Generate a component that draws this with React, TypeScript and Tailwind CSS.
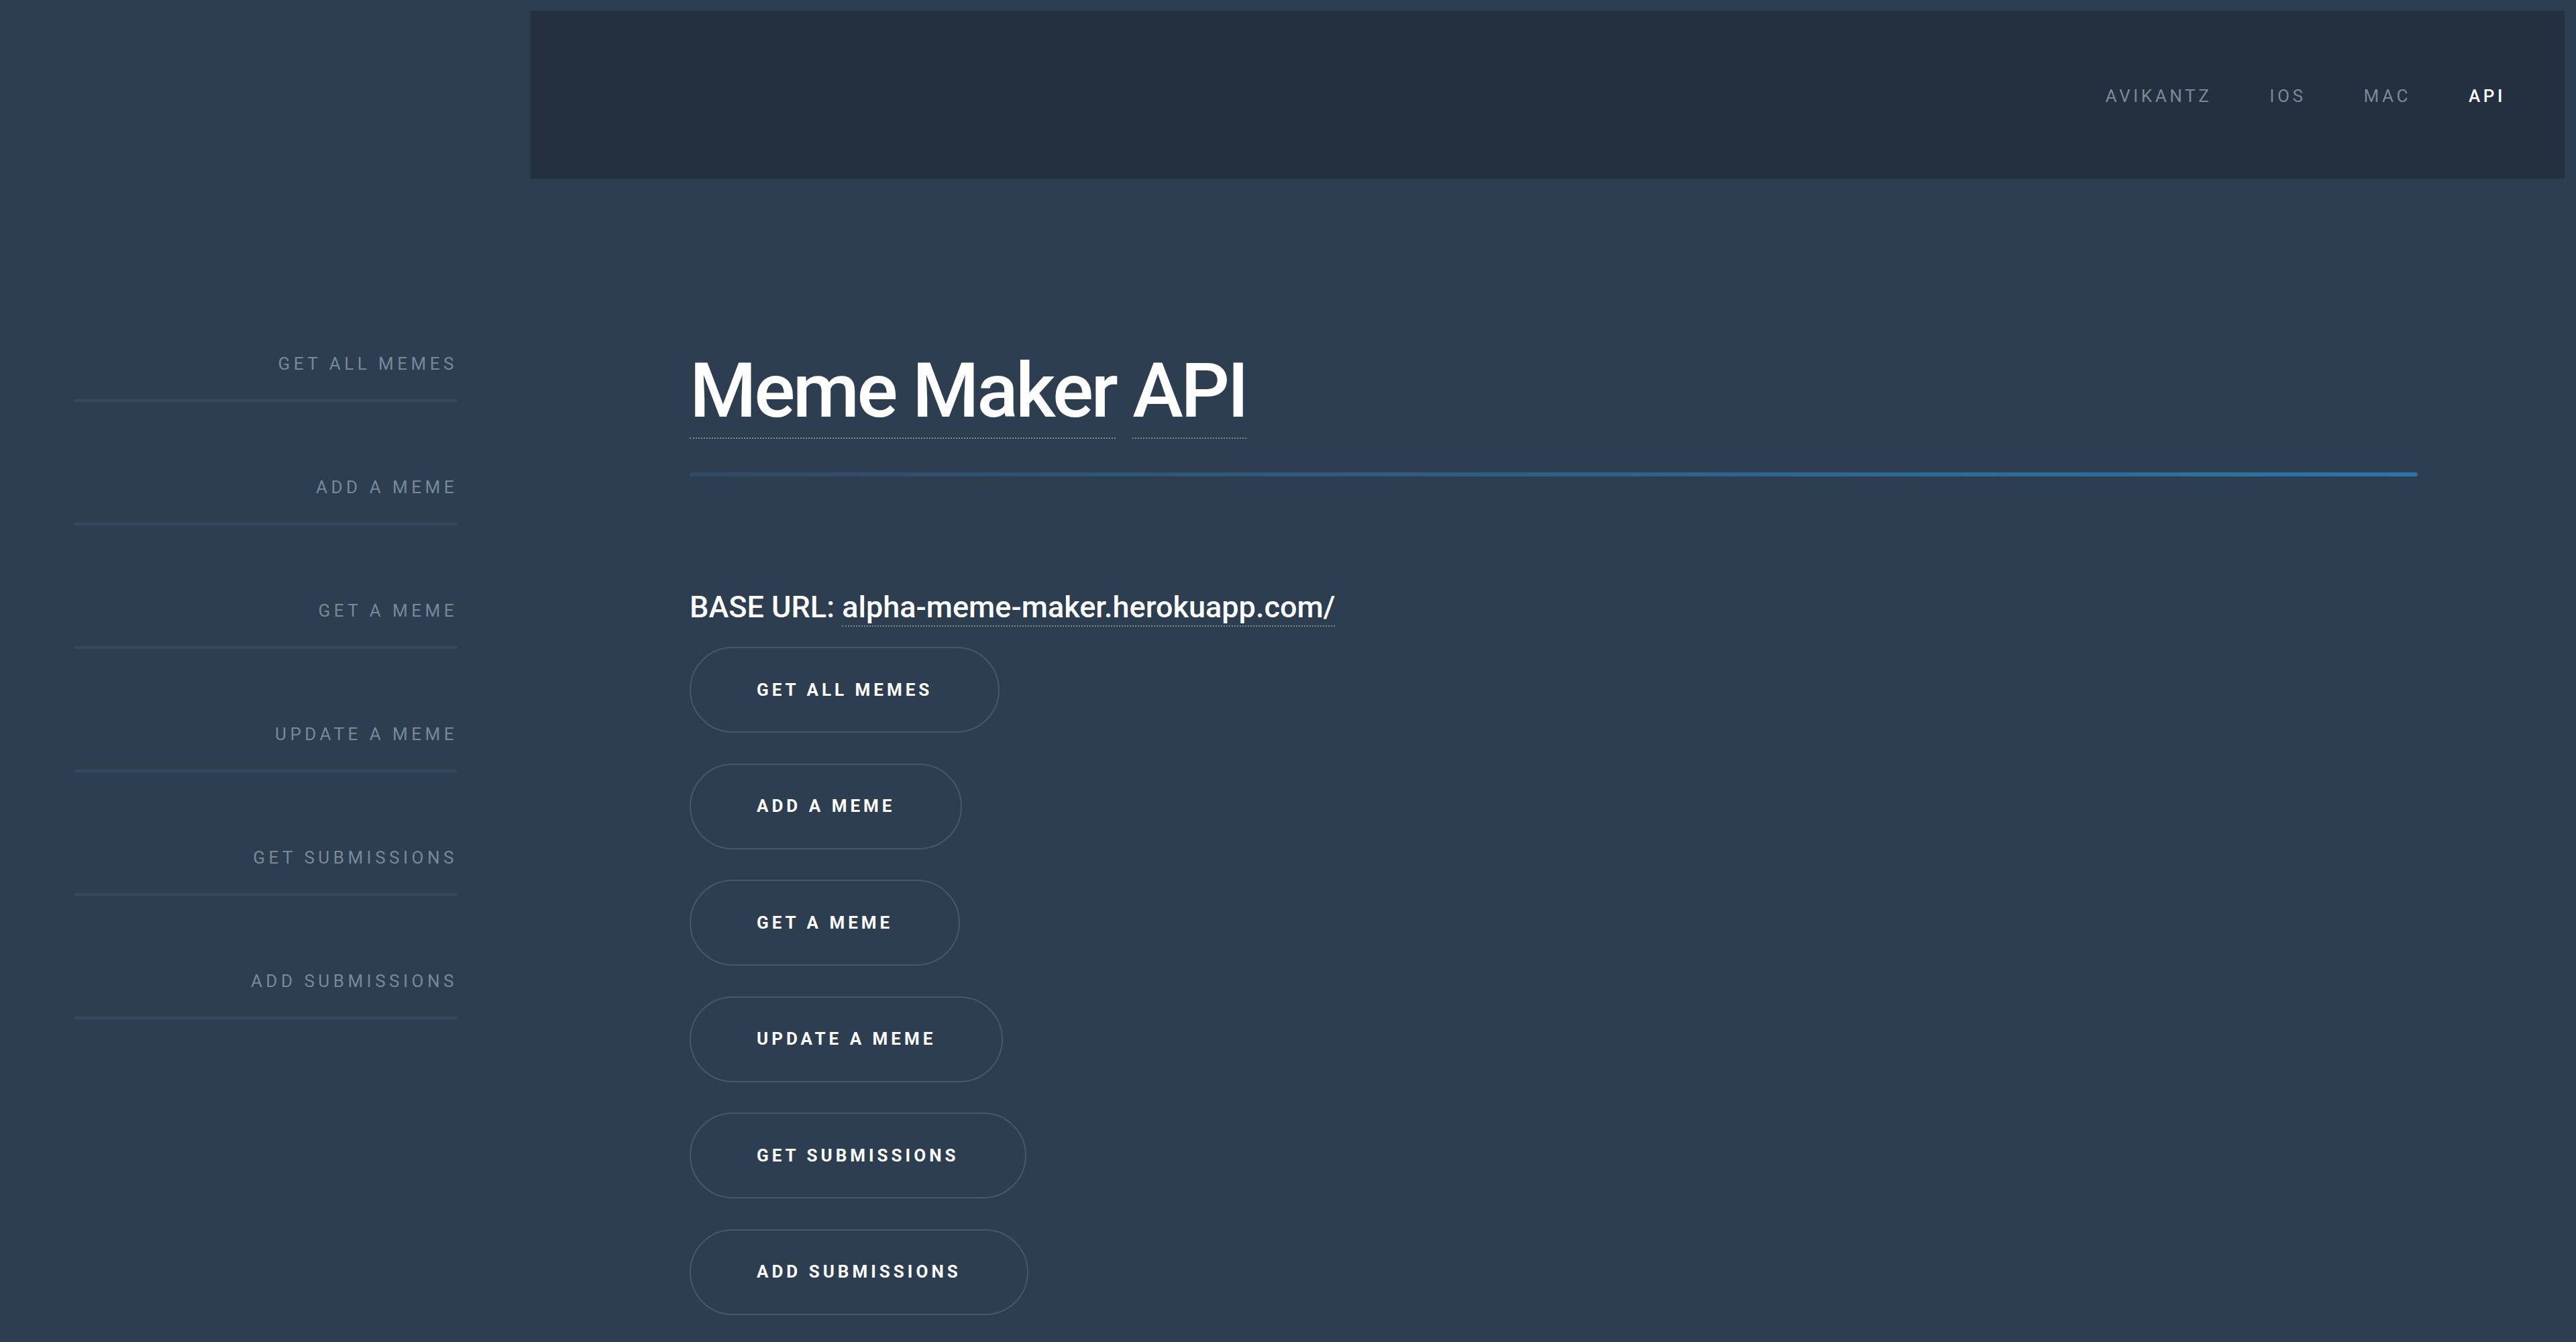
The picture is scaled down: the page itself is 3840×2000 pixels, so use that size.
const sideLinks = [
  "GET ALL MEMES",
  "ADD A MEME",
  "GET A MEME",
  "UPDATE A MEME",
  "GET SUBMISSIONS",
  "ADD SUBMISSIONS",
];

const navLinks = [
  { label: "AVIKANTZ", active: false },
  { label: "IOS", active: false },
  { label: "MAC", active: false },
  { label: "API", active: true },
];

export default function App() {
  return (
    <div className="min-h-[2000px] w-full bg-[#2c3e50] font-['Roboto','Liberation_Sans',sans-serif] flex">
      {/* side navigation */}
      <aside className="w-[791px] shrink-0 pt-[522px] pl-[110px] pr-[109px]">
        <ul className="flex flex-col gap-[107px]">
          {sideLinks.map((l) => (
            <li key={l} className="flex flex-col">
              <a className="h-[40px] leading-[40px] text-right text-[26px] tracking-[5.5px] text-[#7a8899]">
                {l}
              </a>
              <div className="mt-[33px] h-[4px] rounded-full bg-[#34495e]" />
            </li>
          ))}
        </ul>
      </aside>

      <main className="flex-1 pt-[16px] pr-[17px]">
        <header className="h-[250px] pt-[5px] bg-[#22303f] flex items-center justify-end gap-[86px] pr-[88px]">
          {navLinks.map((n) => (
            <a
              key={n.label}
              className={
                "text-[26px] tracking-[4.6px] " +
                (n.active ? "text-white font-medium" : "text-[#7f8994]")
              }
            >
              {n.label}
            </a>
          ))}
        </header>

        <section className="pl-[237px]">
          <h1 className="mt-[259px] text-[114px] leading-none font-medium tracking-[-3.5px] text-white">
            <span className="inline-block pb-[13px] border-b-2 border-dotted border-[#7d8894]">
              Meme Maker
            </span>{" "}
            <span className="inline-block pb-[13px] border-b-2 border-dotted border-[#7d8894]">
              API
            </span>
          </h1>

          <div className="mt-[50px] w-[2576px] h-[6px] rounded-full bg-gradient-to-r from-[#304a63] to-[#2876ab]" />

          <p className="mt-[167px] h-[56px] leading-[56px] text-[45px] font-medium text-white">
            BASE URL:{" "}
            <span className="inline-block leading-[54px] border-b-2 border-dotted border-[#7d8894]">
              alpha-meme-maker.herokuapp.com/
            </span>
          </p>

          <div className="mt-[31px] flex flex-col items-start gap-[45.5px]">
            {sideLinks.map((l) => (
              <button
                key={l}
                className="h-[128px] px-[98px] rounded-full border-2 border-[#485869] text-white text-[26px] font-bold tracking-[5px]"
              >
                {l}
              </button>
            ))}
          </div>
        </section>
      </main>
    </div>
  );
}
